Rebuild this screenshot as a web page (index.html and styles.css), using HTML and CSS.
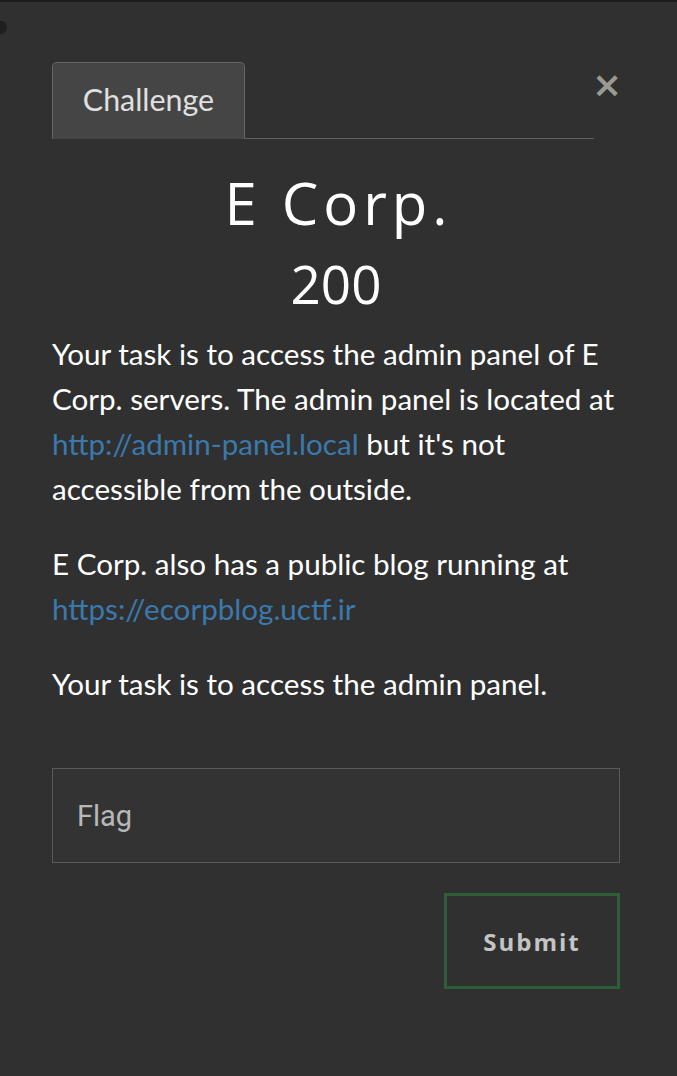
FILE: index.html
```html
<!DOCTYPE html>
<html>
<head>
<meta charset="utf-8">
<link rel="stylesheet" href="styles.css">
</head>
<body>
<div class="topbar"></div>
<div class="blob"></div>
<div class="modal">
  <div class="header">
    <ul class="tabs">
      <li class="tab active">Challenge</li>
    </ul>
    <button class="close" aria-label="Close">&times;</button>
  </div>
  <h1 class="title">E Corp.</h1>
  <h2 class="value">200</h2>
  <div class="desc">
    <p>Your task is to access the admin panel of E Corp. servers. The admin panel is located at <a href="#">http://admin-panel.local</a> but it's not accessible from the outside.</p>
    <p>E Corp. also has a public blog running at <a href="#">https://ecorpblog.uctf.ir</a></p>
    <p>Your task is to access the admin panel.</p>
  </div>
  <form class="form">
    <input class="flag" type="text" placeholder="Flag">
    <div class="actions">
      <button type="button" class="submit">Submit</button>
    </div>
  </form>
</div>
</body>
</html>
```
FILE: styles.css
```css
html, body {
  margin: 0;
  padding: 0;
  background: #303030;
  height: 100%;
}
body {
  font-family: Lato, "Open Sans", sans-serif;
  color: #fff;
  position: relative;
  overflow: hidden;
}
.topbar {
  height: 2px;
  background: #1b1b1b;
}
.blob {
  position: absolute;
  left: -5px;
  top: 21px;
  width: 12px;
  height: 13px;
  border-radius: 50%;
  background: #1f1f1f;
}
.modal {
  margin: 58px 57px 0 52px;
}
.header {
  display: flex;
  align-items: flex-start;
}
.tabs {
  list-style: none;
  margin: 0;
  padding: 0;
  flex: 0 0 542px;
  border-bottom: 1px solid #606060;
  display: flex;
  height: 78px;
}
.tab {
  box-sizing: border-box;
  width: 193px;
  border: 1px solid #666;
  border-bottom: none;
  border-radius: 5px 5px 0 0;
  background: #454545;
  color: #e0e0e0;
  font-family: Lato, sans-serif;
  font-size: 30.4px;
  display: flex;
  align-items: center;
  justify-content: center;
  padding-bottom: 4px;
}
.tab.active {
  margin-top: 2px;
  height: 77px;
}
.close {
  background: none;
  border: none;
  color: #9a9a92;
  font-family: "DejaVu Sans", sans-serif;
  font-weight: bold;
  font-size: 36px;
  line-height: 1;
  padding: 0;
  margin: 7px 0 0 -2px;
  width: 26px;
  cursor: pointer;
}
.title {
  margin: 28px 0 0;
  text-align: center;
  font-family: "Open Sans", sans-serif;
  font-weight: 400;
  font-size: 58px;
  letter-spacing: 5px;
  line-height: 72px;
  padding-left: 5px;
}
.value {
  margin: 13px 0 0;
  text-align: center;
  font-family: "Open Sans", sans-serif;
  font-weight: 400;
  font-size: 53px;
  line-height: 64px;
}
.desc {
  margin-top: 15px;
}
.desc p {
  margin: 0 0 30px;
  font-size: 29.6px;
  line-height: 45px;
}
.desc a {
  color: #3b79ad;
  text-decoration: none;
}
.form {
  margin-top: 62px;
}
.flag {
  display: block;
  box-sizing: border-box;
  width: 568px;
  height: 95px;
  border: 1px solid #5a5a5a;
  background: #333333;
  color: #ddd;
  font-family: Roboto, sans-serif;
  font-size: 29px;
  padding: 0 24px;
  outline: none;
}
.flag::placeholder {
  color: #b8b8b8;
}
.actions {
  display: flex;
  justify-content: flex-end;
  margin-top: 30px;
}
.submit {
  box-sizing: border-box;
  width: 176px;
  height: 96px;
  border: 3px solid #2e5e38;
  background: transparent;
  color: #c4c4c4;
  font-family: "Open Sans", sans-serif;
  font-weight: 700;
  font-size: 24px;
  letter-spacing: 2px;
  cursor: pointer;
}
```
